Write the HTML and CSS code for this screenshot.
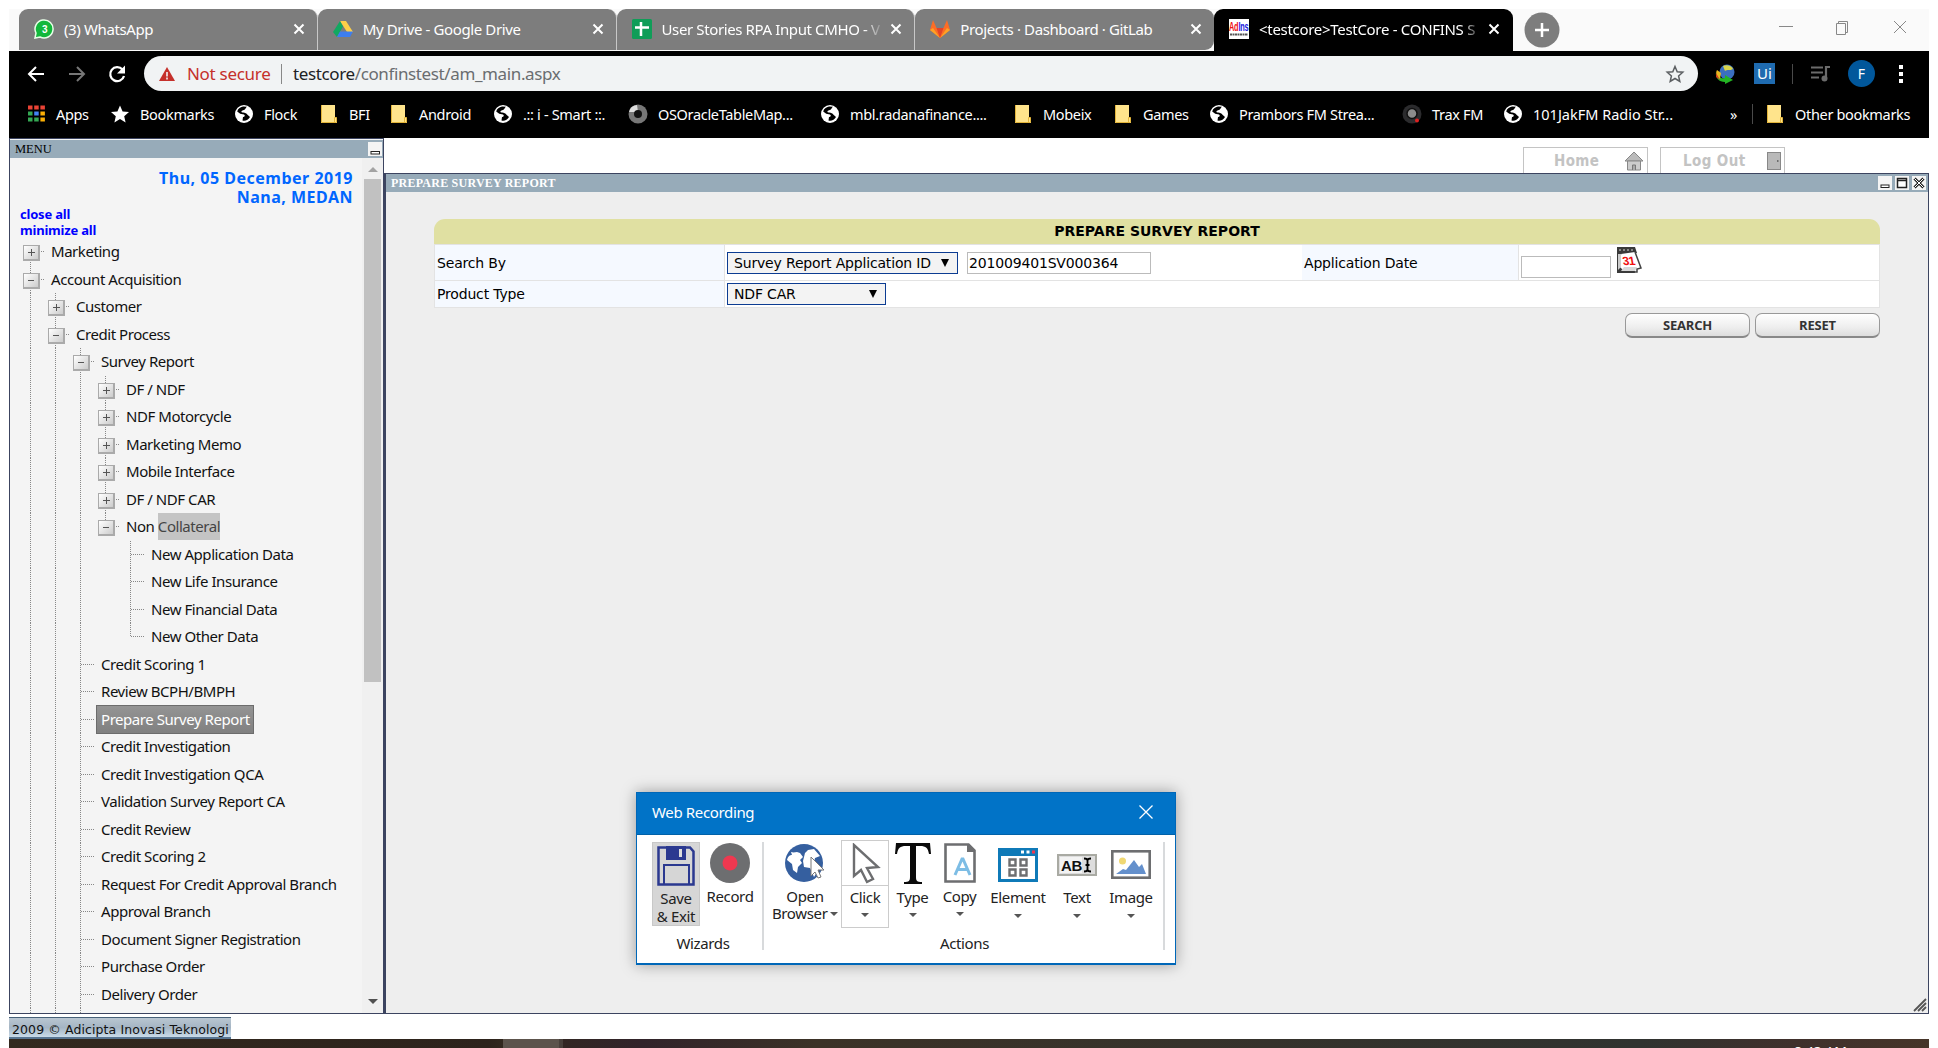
FILE: index.html
```html
<!DOCTYPE html>
<html lang="en">
<head>
<meta charset="utf-8">
<title>TestCore - CONFINS</title>
<link rel="stylesheet" href="styles.css">
</head>
<body>
<svg width="0" height="0" class="defs">
  <symbol id="x" viewBox="0 0 12 12"><path d="M1.500 1.500l9 9M10.500 1.500l-9 9" stroke="#fff" stroke-width="2"/></symbol>
  <symbol id="globe" viewBox="0 0 20 20"><circle cx="10" cy="10" r="9" fill="#fff"/><path d="M9 2.500c-3 .7-5 2-5.800 5l3 2.300 3.800.7c1.500 1 .5 2.500-1 2.500l-.5 3.500c3 .8 6-.8 7.500-3.500l-2.500-2.300c-1-1.500-3-2.500-5-2.200-1.500-.3-1.500-1.500 0-2l2-.8c1-.7 1.500-2.500 2.500-3z" fill="#000"/></symbol>
  <symbol id="folder" viewBox="0 0 16 20"><path d="M0 1h14v12l2 1v5H0z" fill="#ffe48c"/><path d="M.5 1v17.500h15v-5h-2V18" fill="none" stroke="#e3b53a"/></symbol>
</svg>
<div class="screen">
  <header class="browser">
    <div class="tabs">
      <div class="tab"><svg class="fav" viewBox="0 0 20 20"><path d="M1 19l1-5A9 9 0 1 1 6 18z" fill="#12b83b" stroke="#e8ffe8" stroke-width="1.500"/><text x="10.500" y="14" text-anchor="middle" class="badge">3</text></svg><span class="title">(3) WhatsApp</span><svg class="close"><use href="#x"/></svg></div>
      <div class="tab"><svg class="fav" viewBox="0 0 20 20"><path d="M7 2h6l7 11h-6z" fill="#ffcf48"/><path d="M7 2l3 5.500L4 18l-4-5z" fill="#11a861"/><path d="M7 12.500h13L17 18H4z" fill="#3d7ef0"/></svg><span class="title">My Drive - Google Drive</span><svg class="close"><use href="#x"/></svg></div>
      <div class="tab"><svg class="fav" viewBox="0 0 20 20"><rect width="20" height="20" rx="1.500" fill="#0f9d58"/><path d="M9 3v14M3 8.500h14" stroke="#fff" stroke-width="2.500"/></svg><span class="title fade">User Stories RPA Input CMHO - V</span><svg class="close"><use href="#x"/></svg></div>
      <div class="tab"><svg class="fav" viewBox="0 0 20 20"><path d="M10 19L0 11 3 1l3.500 8h7L17 1l3 10z" fill="#fc6d26"/><path d="M10 19L6.500 9h7z" fill="#e24329"/><path d="M0 11l10 8L3 9zM20 11l-10 8 7-10z" fill="#fca326"/></svg><span class="title">Projects · Dashboard · GitLab</span><svg class="close"><use href="#x"/></svg></div>
      <div class="tab active"><svg class="fav" viewBox="0 0 20 20"><rect width="20" height="20" fill="#fff"/><text x="0" y="12" textLength="19.500" lengthAdjust="spacingAndGlyphs" class="adi"><tspan class="red">Ad</tspan><tspan class="blue">Ins</tspan></text><path d="M1 15.500h18" stroke="#555" stroke-width="2" stroke-dasharray="2 .5"/></svg><span class="title fade">&lt;testcore&gt;TestCore - CONFINS S</span><svg class="close"><use href="#x"/></svg></div>
      <svg class="new" viewBox="0 0 36 36"><circle cx="18" cy="18" r="17.500" fill="#7d7d7d"/><path d="M18 11v14M11 18h14" stroke="#fff" stroke-width="2.500"/></svg>
      <svg class="winctl" viewBox="0 0 130 20"><g fill="none" stroke="#888"><path d="M0 9.500h14M57.500 6.500h9v11h-9zM59.500 6V4.500h9v11h-2M115 4l12 12M127 4l-12 12"/></g></svg>
    </div>
    <div class="toolbar">
      <svg class="nav" viewBox="0 0 110 20"><g fill="none" stroke-width="2"><path d="M17 10H2M9 3l-7 7 7 7" stroke="#fff"/><path d="M42 10h15M50 3l7 7-7 7" stroke="#777"/><path d="M95.500 5.500A7 7 0 1 0 97 12" stroke="#fff" stroke-width="2.300"/></g><path d="M98 1.500v8h-8z" fill="#fff"/></svg>
      <div class="omnibox">
        <svg width="16" height="14" viewBox="0 0 16 14"><path d="M8 0l8 14H0z" fill="#c5302b"/><path d="M8 5v4.500M8 10.500v2" stroke="#f1f3f4" stroke-width="1.600"/></svg>
        <span class="insecure">Not secure</span><span class="bar"></span><span class="url"><b>testcore</b>/confinstest/am_main.aspx</span>
        <svg class="star" viewBox="0 0 20 20"><path d="M10 2.500l2.200 5.200 5.600.5-4.200 3.700 1.200 5.500L10 14.500l-4.800 2.900 1.200-5.500-4.200-3.700 5.600-.5z" fill="none" stroke="#5c5f62" stroke-width="1.500"/></svg>
      </div>
      <div class="ext">
        <svg class="idm" viewBox="0 0 22 20"><circle cx="13" cy="8" r="7.500" fill="#3b6fc0"/><path d="M9 2c4-2 9 0 10 3-3 2-6 0-8 2z" fill="#d9d44c"/><path d="M2 8c1 5 5 7 9 6V11l8 5-8 4v-2C5 18 1 14 2 8z" fill="#23b523"/><path d="M3 6c-2 3 0 7 3 9l1-6z" fill="#e8b820"/><path d="M2 9l4 7-4-3z" fill="#d43b20"/></svg>
        <span class="ui">Ui</span><span class="vbar"></span>
        <svg class="queue" viewBox="0 0 20 18"><path d="M0 2.500h12M0 7.500h12M0 12.500h8M15 13V2h4" fill="none" stroke="#6b6b6b" stroke-width="2.200"/><circle cx="13.500" cy="13.500" r="3" fill="#6b6b6b"/></svg>
        <span class="avatar">F</span>
        <svg class="dots" viewBox="0 0 4 18"><path d="M0 0h4v4H0zM0 7h4v4H0zM0 14h4v4H0z" fill="#fff"/></svg>
      </div>
    </div>
    <div class="bookmarks">
      <div class="marks">
        <a><svg class="ap" viewBox="0 0 17 17"><path d="M0 2.500h17" stroke="#ea4335" stroke-width="4" stroke-dasharray="4.500 1.700"/><path d="M0 8.500h17" stroke="#34a853" stroke-width="4" stroke-dasharray="4.500 20"/><path d="M6.200 8.500h4.500" stroke="#4285f4" stroke-width="4"/><path d="M12.400 8.500h4.500" stroke="#fbaf05" stroke-width="4"/><path d="M0 14.500h10.700" stroke="#34a853" stroke-width="4" stroke-dasharray="4.500 1.700"/><path d="M12.400 14.500h4.500" stroke="#fbaf05" stroke-width="4"/></svg>Apps</a>
        <a><svg viewBox="0 0 20 20"><path d="M10 1.500l2.600 6 6.400.5-4.800 4.200 1.400 6.300-5.600-3.400-5.600 3.400 1.400-6.300L1 8l6.400-.5z" fill="#fff"/></svg>Bookmarks</a>
        <a><svg><use href="#globe"/></svg>Flock</a>
        <a><svg class="fd"><use href="#folder"/></svg>BFI</a>
        <a><svg class="fd"><use href="#folder"/></svg>Android</a>
        <a><svg><use href="#globe"/></svg>.:: i - Smart ::.</a>
        <a><svg viewBox="0 0 20 20"><circle cx="10" cy="10" r="9.500" fill="#777"/><path d="M1 8a9 9 0 0 1 8-7l1 7z" fill="#ddd"/><circle cx="10" cy="10" r="4" fill="#111"/></svg>OSOracleTableMap...</a>
        <a><svg><use href="#globe"/></svg>mbl.radanafinance....</a>
        <a><svg class="fd"><use href="#folder"/></svg>Mobeix</a>
        <a><svg class="fd"><use href="#folder"/></svg>Games</a>
        <a><svg><use href="#globe"/></svg>Prambors FM Strea...</a>
        <a><svg viewBox="0 0 20 20"><circle cx="10" cy="10" r="9.500" fill="#2b2b2d"/><circle cx="10" cy="9.500" r="5" fill="#8c8c8c" stroke="#111" stroke-width="1.500"/><circle cx="15" cy="16.500" r="2" fill="#d22"/></svg>Trax FM</a>
        <a class="jak"><svg><use href="#globe"/></svg>101JakFM Radio Str...</a>
      </div>
      <span class="more">»</span><span class="vbar"></span>
      <a><svg class="fd"><use href="#folder"/></svg>Other bookmarks</a>
    </div>
  </header>

  <div class="app">
    <nav class="menu">
      <div class="bar-title"><span>MENU</span><svg class="wb" viewBox="0 0 14 14"><rect width="14" height="14" fill="#f4f4f4"/><rect x="3" y="9.500" width="8.500" height="2.500" fill="#fff" stroke="#222"/></svg></div>
      <div class="menu-body">
        <div class="menu-main">
          <div class="who">Thu, 05 December 2019<br>Nana, MEDAN</div>
          <div class="links"><a>close all</a><br><a>minimize all</a></div>
          <ul class="tree">
            <li><i class="n p first"></i><span>Marketing</span></li>
            <li><i class="n"></i><span>Account Acquisition</span></li>
            <li><i class="g"></i><i class="n p"></i><span>Customer</span></li>
            <li><i class="g"></i><i class="n"></i><span>Credit Process</span></li>
            <li><i class="g"></i><i class="g"></i><i class="n"></i><span>Survey Report</span></li>
            <li><i class="g"></i><i class="g"></i><i class="g"></i><i class="n p"></i><span>DF / NDF</span></li>
            <li><i class="g"></i><i class="g"></i><i class="g"></i><i class="n p"></i><span>NDF Motorcycle</span></li>
            <li><i class="g"></i><i class="g"></i><i class="g"></i><i class="n p"></i><span>Marketing Memo</span></li>
            <li><i class="g"></i><i class="g"></i><i class="g"></i><i class="n p"></i><span>Mobile Interface</span></li>
            <li><i class="g"></i><i class="g"></i><i class="g"></i><i class="n p"></i><span>DF / NDF CAR</span></li>
            <li><i class="g"></i><i class="g"></i><i class="g"></i><i class="n last"></i><span>Non <mark>Collateral</mark></span></li>
            <li><i class="g"></i><i class="g"></i><i class="g"></i><i></i><i class="l"></i><span>New Application Data</span></li>
            <li><i class="g"></i><i class="g"></i><i class="g"></i><i></i><i class="l"></i><span>New Life Insurance</span></li>
            <li><i class="g"></i><i class="g"></i><i class="g"></i><i></i><i class="l"></i><span>New Financial Data</span></li>
            <li><i class="g"></i><i class="g"></i><i class="g"></i><i></i><i class="l last"></i><span>New Other Data</span></li>
            <li><i class="g"></i><i class="g"></i><i class="l"></i><span>Credit Scoring 1</span></li>
            <li><i class="g"></i><i class="g"></i><i class="l"></i><span>Review BCPH/BMPH</span></li>
            <li><i class="g"></i><i class="g"></i><i class="l"></i><span class="sel">Prepare Survey Report</span></li>
            <li><i class="g"></i><i class="g"></i><i class="l"></i><span>Credit Investigation</span></li>
            <li><i class="g"></i><i class="g"></i><i class="l"></i><span>Credit Investigation QCA</span></li>
            <li><i class="g"></i><i class="g"></i><i class="l"></i><span>Validation Survey Report CA</span></li>
            <li><i class="g"></i><i class="g"></i><i class="l"></i><span>Credit Review</span></li>
            <li><i class="g"></i><i class="g"></i><i class="l"></i><span>Credit Scoring 2</span></li>
            <li><i class="g"></i><i class="g"></i><i class="l"></i><span>Request For Credit Approval Branch</span></li>
            <li><i class="g"></i><i class="g"></i><i class="l"></i><span>Approval Branch</span></li>
            <li><i class="g"></i><i class="g"></i><i class="l"></i><span>Document Signer Registration</span></li>
            <li><i class="g"></i><i class="g"></i><i class="l"></i><span>Purchase Order</span></li>
            <li><i class="g"></i><i class="g"></i><i class="l"></i><span>Delivery Order</span></li>
            <li><i class="g"></i><i class="g"></i><i class="g"></i></li>
          </ul>
        </div>
        <div class="scroll"><i class="up"></i><i class="thumb"></i><i class="down"></i></div>
      </div>
    </nav>

    <section class="right">
      <div class="topnav">
        <a class="tn">Home<svg width="20" height="20" viewBox="0 0 20 20"><path d="M1 10L10 1l9 9z" fill="#bbb" stroke="#888"/><path d="M3.500 10v9h13v-9z" fill="#ccc" stroke="#888"/><path d="M8.500 19v-5h3v5" fill="#aaa" stroke="#777"/></svg></a>
        <a class="tn out">Log Out<svg width="14" height="18" viewBox="0 0 14 18"><rect x=".5" y=".5" width="13" height="17" fill="#b9b9b9" stroke="#888"/><path d="M10 9h1.500" stroke="#555" stroke-width="1.500"/></svg></a>
      </div>
      <main class="window">
        <div class="bar-title light"><span>PREPARE SURVEY REPORT</span>
          <div class="wbs">
            <svg class="wb" viewBox="0 0 14 14"><rect width="14" height="14" fill="#f4f4f4"/><rect x="3" y="9" width="8" height="2.500" fill="#fff" stroke="#222"/></svg>
            <svg class="wb" viewBox="0 0 14 14"><rect width="14" height="14" fill="#f4f4f4"/><path d="M2.500 2.500h9v9h-9zM2 4.500h10" fill="#fff" stroke="#222" stroke-width="1.500"/></svg>
            <svg class="wb" viewBox="0 0 14 14"><rect width="14" height="14" fill="#f4f4f4"/><path d="M2.500 2.500l9 9M11.500 2.500l-9 9" stroke="#222" stroke-width="3"/><path d="M2.500 2.500l9 9M11.500 2.500l-9 9" stroke="#fff"/></svg>
          </div>
        </div>
        <div class="content">
          <h1>PREPARE SURVEY REPORT</h1>
          <div class="form">
            <label>Search By</label>
            <div class="cell"><span class="select s1">Survey Report Application ID<i></i></span><span class="input">201009401SV000364</span></div>
            <label>Application Date</label>
            <div class="cell date"><span class="input"></span><svg width="26" height="26" viewBox="0 0 26 26"><path d="M1 0h18l2 6L5 8l-1 12 3 3h12v3H1z" fill="#3a3a3a"/><path d="M3 3h16" stroke="#888" stroke-width="2" stroke-dasharray="2 2"/><path d="M2 7h3v13l-3 3z" fill="#ccc"/><path d="M5 7l14-2 5 15-4 1H9z" fill="#fff"/><path d="M8 20l-3 4h14l2-4z" fill="#d8d8d8"/><path d="M19 5l6 16-4 1v3h-3" fill="none" stroke="#444" stroke-width="1.500"/><text x="7" y="18" transform="skewX(10) translate(-3 0)" class="day">31</text></svg></div>
            <label class="r2">Product Type</label>
            <div class="cell wide"><span class="select s2">NDF CAR<i></i></span></div>
          </div>
          <div class="actions"><button>SEARCH</button><button>RESET</button></div>
        </div>
        <svg class="grip" viewBox="0 0 14 14"><path d="M1 13L13 1M5 13l8-8M9 13l4-4" stroke="#555" stroke-width="1.800" fill="none"/></svg>
      </main>
    </section>
  </div>
  <footer><span>2009 © Adicipta Inovasi Teknologi</span></footer>
  <div class="taskbar"><i></i><span>8:43 AM</span></div>
</div>

<div class="dialog">
  <div class="dhead"><span>Web Recording</span><svg width="14" height="14" viewBox="0 0 14 14"><path d="M.5.5l13 13M13.500.5l-13 13" stroke="#fff" stroke-width="1.300"/></svg></div>
  <div class="dbody">
    <div class="group wiz">
      <div class="tools">
        <div class="tool save"><svg width="38" height="40" viewBox="0 0 38 40"><path d="M1.500 1.500H33l3.500 4v33h-35z" fill="none" stroke="#2b3990" stroke-width="2.500"/><path d="M9 0h20v14H9z" fill="#2b3990"/><path d="M22 3h3v8h-3z" fill="#ddd"/><path d="M7 39V19h25v20" fill="none" stroke="#2b3990" stroke-width="2"/></svg><span>Save<br>&amp; Exit</span></div>
        <div class="tool rec"><svg width="40" height="40" viewBox="0 0 40 40"><circle cx="20" cy="20" r="20" fill="#6d6e70"/><circle cx="20" cy="20" r="7.500" fill="#ee3850"/></svg><span>Record</span></div>
      </div>
      <div class="gname">Wizards</div>
    </div>
    <div class="group act">
      <div class="tools">
        <div class="tool w-open"><svg width="42" height="40" viewBox="0 0 42 40"><circle cx="20" cy="20" r="19" fill="#355f9f"/><path d="M3 17c1-4 3-5 5-5l-1-3c3 1 4 0 6 0l3 1 3 4-3 3 2 3-4 4-1 6-4-3-1-6zM21 10l3-3 6-1 6 7-5 2-1 4 3 10-3 5-4-9-6-1-1-6z" fill="#fff"/><path d="M27 14v19l4-4 3 6 3-1-3-7h6z" fill="#fff" stroke="#777"/></svg><span>Open<br>Browser <b class="dn"></b></span></div>
        <div class="tool w-click"><svg width="30" height="41" viewBox="0 0 30 41"><path d="M2 2v31l7-6 6 12 6-3-6-11 11-1z" fill="#fff" stroke="#6d6e70" stroke-width="2.400"/></svg><span>Click</span><b class="dn"></b></div>
        <div class="tool w-type"><svg width="36" height="41" viewBox="0 0 36 41"><path d="M1 0h34l1 11h-2c-1-6-3-8-9-8h-4v31c0 4 1 5 6 5v2H9v-2c5 0 6-1 6-5V3h-4C5 3 3 5 2 11H0z" fill="#0a0a0a"/></svg><span>Type</span><b class="dn"></b></div>
        <div class="tool w-copy"><svg width="32" height="40" viewBox="0 0 32 40"><path d="M1.500 1.500h23l6 6v31h-29z" fill="#fff" stroke="#6d6e70" stroke-width="2.600"/><path d="M23 1v8h8z" fill="#6d6e70"/><path d="M11 32l7-16h1l7 16M13.500 26.500h10" fill="none" stroke="#7dbde5" stroke-width="3"/></svg><span>Copy</span><b class="dn"></b></div>
        <div class="tool low w-elem"><svg width="40" height="34" viewBox="0 0 40 34"><rect x="1.500" y="1.500" width="37" height="31" fill="#fff" stroke="#0f7ab8" stroke-width="3"/><path d="M0 0h40v8H0z" fill="#0f7ab8"/><path d="M23 4h3M28.500 4h3" stroke="#fff" stroke-width="3"/><path d="M34 4h3" stroke="#ee3850" stroke-width="3"/><path d="M11.500 11.500h6v6h-6zM22.500 11.500h6v6h-6zM11.500 21.500h6v6h-6zM22.500 21.500h6v6h-6z" fill="none" stroke="#6d6e70" stroke-width="2.400"/></svg><span>Element</span><b class="dn"></b></div>
        <div class="tool low w-text"><svg width="40" height="22" viewBox="0 0 40 22"><rect x="1" y="1" width="38" height="20" fill="#ddd" stroke="#a9aaa3" stroke-width="2"/><path d="M3 3h22v16H3z" fill="#f3f3f3"/><text x="4" y="16.500" textLength="21" class="ab">AB</text><path d="M27 4.500c2 0 3.500.5 3.500 2v9c0 1.500-1.500 2-3.500 2M34 4.500c-2 0-3.500.5-3.500 2v9c0 1.500 1.500 2 3.500 2M28.500 11h4" fill="none" stroke="#000" stroke-width="1.800"/></svg><span>Text</span><b class="dn"></b></div>
        <div class="tool low w-img"><svg width="40" height="29" viewBox="0 0 40 29"><rect x="1.300" y="1.300" width="37.400" height="26.400" fill="#fff" stroke="#6d6e70" stroke-width="2.600"/><circle cx="11.500" cy="11" r="3.500" fill="#f0d873"/><path d="M5 24l7-5 3 1 8-10 5 7 3-3 4 10z" fill="#6490cc"/></svg><span>Image</span><b class="dn"></b></div>
      </div>
      <div class="gname">Actions</div>
    </div>
  </div>
</div>
</body>
</html>
```

FILE: styles.css
```css
* { box-sizing: border-box; }
body { margin: 0; width: 1938px; height: 1048px; overflow: hidden; background: #fff; font-family: "Noto Sans", "Open Sans", sans-serif; }
.defs { position: absolute; }
svg { display: block; flex: none; }
.screen { margin: 9px 9px 0; width: 1920px; height: 1039px; display: flex; flex-direction: column; overflow: hidden; }

/* browser */
.browser { height: 129px; background: #000; color: #fff; flex: none; }
.tabs { height: 42px; background: #fafafa; display: flex; padding-left: 10px; align-items: flex-start; }
.tab { width: 298.750px; height: 41px; padding: 0 12px 2px 15px; display: flex; align-items: center; background: #7d7d7d; border-radius: 9px 9px 0 0; border-right: 1px solid #c8c8c8; font-size: 15px; letter-spacing: -.38px; }
.tab:nth-child(4) { border-right: 0; border-radius: 9px 9px 9px 0; }
.tab.active { background: #000; height: 42px; border: 0; padding: 0 13px 3px 15px; letter-spacing: -.3px; }
.fav { width: 20px; height: 20px; margin-right: 10px; }
.title { flex: 1; white-space: nowrap; overflow: hidden; }
.fade { -webkit-mask-image: linear-gradient(90deg, #000 91%, transparent); mask-image: linear-gradient(90deg, #000 91%, transparent); }
.close { width: 12px; height: 12px; margin-left: 6px; }
.badge { font: bold 10px "Liberation Sans"; fill: #fff; }
.adi { font: bold 12px "Liberation Sans"; }
.red { fill: #e11; }
.blue { fill: #22d; }
.new { width: 36px; height: 36px; margin: 3px 0 0 11px; }
.winctl { width: 130px; height: 20px; margin: 8px 20px 0 auto; }
.toolbar { height: 45px; display: flex; align-items: center; padding-left: 18px; }
.nav { width: 110px; height: 20px; margin-right: 7px; }
.omnibox { width: 1554px; height: 35px; border-radius: 18px; background: #f1f3f4; display: flex; align-items: center; padding: 0 13px 0 15px; font-size: 17px; }
.insecure { color: #c5302b; margin-left: 12px; width: 88px; letter-spacing: -.3px; white-space: nowrap; }
.bar { width: 1px; height: 20px; background: #888; margin: 0 11px 0 6px; }
.url { color: #6a6d70; flex: 1; letter-spacing: -.38px; }
.url b { color: #202124; font-weight: 400; }
.star { width: 20px; height: 20px; }
.ext { flex: 1; display: flex; align-items: center; }
.idm { width: 22px; height: 20px; margin-left: 16px; }
.ui { width: 21px; height: 21px; background: #1f6bb0; color: #fff; font-size: 15px; line-height: 20px; text-align: center; margin-left: 18px; }
.vbar { width: 1px; height: 20px; background: #4a4a4a; margin-left: 17px; }
.queue { width: 20px; height: 18px; margin-left: 18px; }
.avatar { width: 27px; height: 27px; border-radius: 50%; background: #01579b; font-size: 14px; line-height: 27px; text-align: center; margin-left: 17px; }
.dots { width: 4px; height: 18px; margin-left: 24px; }
.bookmarks { height: 35px; display: flex; align-items: center; padding-left: 19px; font-size: 14.500px; letter-spacing: -.33px; }
.bookmarks a { display: flex; align-items: center; gap: 10px; white-space: nowrap; }
.bookmarks svg { width: 20px; height: 20px; }
.bookmarks .ap { width: 17px; height: 17px; margin-right: 1px; }
.bookmarks .fd { width: 16px; height: 20px; margin-right: 2px; }
.bookmarks .jak { letter-spacing: 0; }
.marks { width: 1702px; display: grid; grid-template-columns: 82px 124px 87px 70px 102px 135px 192px 195px 100px 94px 193px 101px 220px; }
.more { width: 8px; }
.bookmarks .vbar { margin-left: 14px; margin-right: 14px; }

/* application frame */
.app { height: 876px; flex: none; display: flex; }
.menu { width: 375px; height: 876px; border: 1px solid #3c4460; border-right-width: 1px; background: #f4f4f4; display: flex; flex-direction: column; overflow: hidden; }
.bar-title { height: 18px; flex: none; background: #97abb9; display: flex; align-items: center; justify-content: space-between; padding: 0 1px 0 5px; font: 12.500px "Liberation Serif", serif; margin-top: 1px; }
.light { color: #fff; font-weight: bold; margin-top: 0; font-size: 12px; padding-left: 5px; padding-right: 2px; letter-spacing: .23px; }
.wb { width: 14px; height: 14px; }
.wbs { display: flex; gap: 3px; }
.menu-body { flex: 1; display: flex; min-height: 0; }
.menu-main { flex: 1; overflow: hidden; }
.who { color: #06f; font: bold 16px/19px "Noto Sans", sans-serif; letter-spacing: .5px; text-align: right; padding: 11px 0 0; width: 343px; height: 48px; }
.links { color: #00f; font: bold 13px/16px "Noto Sans", sans-serif; padding-left: 10px; height: 34px; letter-spacing: -.2px; }
.tree { list-style: none; margin: -2px 0 0; padding: 0 0 0 7px; font-size: 15px; letter-spacing: -.45px; color: #111; }
.tree li { display: flex; height: 27.500px; align-items: center; }
.tree i { width: 25px; height: 100%; flex: none; position: relative; }
.tree .g, .tree .l, .tree .n { background: repeating-linear-gradient(#888 0 1px, transparent 1px 2px) 13px 0/1px 100% no-repeat; }
.tree .last { background-size: 1px 50%; }
.tree .first { background-size: 1px 50%; background-position: 13px 100%; }
.tree .l::after, .tree .n::after { content: ""; position: absolute; left: 14px; top: 13px; width: 13px; height: 1px; background: repeating-linear-gradient(90deg, #888 0 1px, transparent 1px 2px); }
.tree .n::before { content: ""; position: absolute; left: 6px; top: 7px; width: 14px; height: 13px; z-index: 1; border: 1px solid #aaa; border-width: 1px 2px 2px 1px; background: linear-gradient(#555, #555) center/6px 1px no-repeat, linear-gradient(135deg, #fff, #ccc); }
.tree .p::before { background: linear-gradient(#555, #555) center/7px 1px no-repeat, linear-gradient(#555, #555) center/1px 7px no-repeat, linear-gradient(135deg, #fff, #ccc); }
.tree span { margin-left: 4px; padding: 0 4px 0 5px; height: 27px; line-height: 27px; white-space: nowrap; }
.tree mark { display: inline-block; height: 27px; background: #c4c4c4; color: #444; }
.tree .sel { background: linear-gradient(#949494, #808080); border: 1px solid #6c6c6c; color: #fff; height: 29px; padding: 0 3px 0 4px; }
.scroll { width: 21px; background: #f0f0f0; display: flex; flex-direction: column; align-items: center; padding-top: 9px; }
.up { border: 5px solid transparent; border-top: 0; border-bottom-color: #a3a3a3; }
.thumb { width: 17px; height: 503px; background: #c1c1c1; margin-top: 7px; }
.down { border: 5px solid transparent; border-bottom: 0; border-top-color: #505050; margin-top: auto; margin-bottom: 9px; }
.right { flex: 1; display: flex; flex-direction: column; }
.topnav { height: 35px; display: flex; align-items: flex-end; gap: 12px; padding-left: 1139px; }
.tn { width: 125px; height: 26px; border: 1px solid #c4c4c4; border-bottom: 0; display: flex; align-items: center; justify-content: space-between; padding: 0 3px 0 30px; font: bold 15px "DejaVu Sans Condensed", "DejaVu Sans", sans-serif; letter-spacing: .4px; color: #c3c3c3; }
.out { padding-left: 22px; }
.window { height: 841px; border: 1px solid #3c4460; border-left-width: 2px; background: #eee; position: relative; }
.content { padding: 27px 48px 0 48px; }
h1 { margin: 0; height: 25px; border-radius: 11px 11px 0 0; background: #e0e0a2; text-align: center; font: bold 14px/25px "DejaVu Sans", sans-serif; letter-spacing: 0; }
.form { display: grid; grid-template-columns: 290px 577px 217px 1fr; grid-template-rows: 36px 27px; border: solid #e3e3e3; border-width: 1px 1px 0; font: 14px "DejaVu Sans", sans-serif; letter-spacing: -.17px; }
.form label, .cell { border-bottom: 1px solid #e3e3e3; border-right: 1px solid #e3e3e3; display: flex; align-items: center; padding-left: 2px; background: #fff; }
.form label { background: #f5f9ff; }
.cell { border-right: 0; }
.wide { grid-column: span 3; }
.select { height: 22px; border: 1px solid #0c3c92; background: #f3f3f3; display: flex; align-items: center; justify-content: space-between; padding: 0 8px 0 6px; white-space: nowrap; }
.select i { border: 4px solid transparent; border-top: 8px solid #000; border-bottom: 0; }
.s1 { width: 231px; }
.s2 { width: 159px; }
.input { width: 184px; height: 22px; line-height: 20px; border: 1px solid #bbb; padding-left: 1px; background: #fff; margin-left: 9px; }
.date .input { width: 90px; margin: 9px 5px 0 0; }
.date svg { margin-top: -5px; }
.day { font: bold 12px "Liberation Sans"; fill: #f01010; letter-spacing: -.5px; }
.actions { display: flex; justify-content: flex-end; gap: 5px; margin-top: 5px; }
button { width: 125px; height: 25px; border: 1px solid #999; border-bottom: 2px solid #888; border-radius: 7px; background: linear-gradient(#fff, #eee 60%, #ddd); font: bold 13px "Open Sans", sans-serif; color: #333; padding: 0; letter-spacing: -.2px; }
.grip { position: absolute; right: 1px; bottom: 1px; width: 14px; height: 14px; }
footer { height: 25px; flex: none; padding-top: 3px; }
footer span { display: block; width: 222px; height: 22px; background: linear-gradient(#b9c6d1, #a5b5c4 50%, #c9dbe9); border-top: 1px solid #466078; border-bottom: 2px solid #587591; font: 12.500px/24px "DejaVu Sans", sans-serif; letter-spacing: .1px; padding-left: 3px; white-space: nowrap; color: #111; }
.taskbar { height: 9px; flex: none; overflow: hidden; background: linear-gradient(90deg, #33291f, #2d231c 25%, #33291f 26%, #31232a 33%, #3b3227 42%, #303330 85%, #40302c 93%, #463529); display: flex; align-items: flex-start; }
.taskbar i { width: 60px; height: 9px; background: #5c534c; margin-left: 494px; border-right: 4px solid #48403b; }
.taskbar span { color: #fff; font-size: 14px; line-height: 20px; margin-left: 1231px; white-space: nowrap; padding-top: 3px; }

/* floating recorder */
.dialog { position: absolute; left: 636px; top: 792px; width: 540px; height: 173px; background: #fff; border: 1px solid #0067b8; border-bottom-width: 2px; box-shadow: 0 0 14px rgba(0,0,0,.35); font-size: 15px; letter-spacing: -.35px; color: #222; }
.dhead { height: 42px; background: #0173c7; border-bottom: 1px solid #0061a8; color: #fff; display: flex; align-items: center; justify-content: space-between; padding: 0 22px 3px 15px; }
.dbody { display: flex; padding-top: 5px; }
.group { height: 124px; position: relative; }
.group::after { content: ""; position: absolute; right: 0; top: 2px; height: 108px; width: 2px; background: #d8dadc; }
.wiz { width: 127px; padding-left: 15px; }
.act { width: 401px; }
.tools { display: flex; height: 92px; }
.tool { display: flex; flex-direction: column; align-items: center; text-align: center; line-height: 17px; padding-top: 3px; }
.tool span { margin-top: 5px; white-space: nowrap; }
.save { width: 48px; height: 84px; margin-top: 2px; background: #d6d6d6; border: 1px solid #c8c8c8; line-height: 18px; }
.save span { margin-top: 3px; }
.rec { width: 60px; }
.low { padding-top: 8px; }
.dn { display: inline-block; border: 4px solid transparent; border-top-color: #555; border-bottom: 0; margin-top: 7px; }
.low .dn { margin-top: 8px; }
.tool span .dn { margin: 0 0 3px -1px; }
.w-open { width: 77px; padding-left: 5px; }
.w-click { width: 48px; height: 88px; border: 1px solid #ccc; padding-top: 2px; background: linear-gradient(#ccc, #ccc) 0 44px/100% 1px no-repeat; }
.w-click svg { margin-left: 3px; }
.w-type { width: 47px; }
.w-copy { width: 47px; }
.w-elem { width: 70px; }
.w-text { width: 48px; }
.w-img { width: 60px; }
.low span { margin-top: 7px; }
.w-text svg { margin: 6px 0; }
.w-img svg { margin: 2px 0 3px; }
.gname { text-align: center; line-height: 20px; margin-top: 1px; }
.wiz .gname { width: 102px; }
.ab { font: bold 15px "Liberation Sans"; fill: #111; }
```
